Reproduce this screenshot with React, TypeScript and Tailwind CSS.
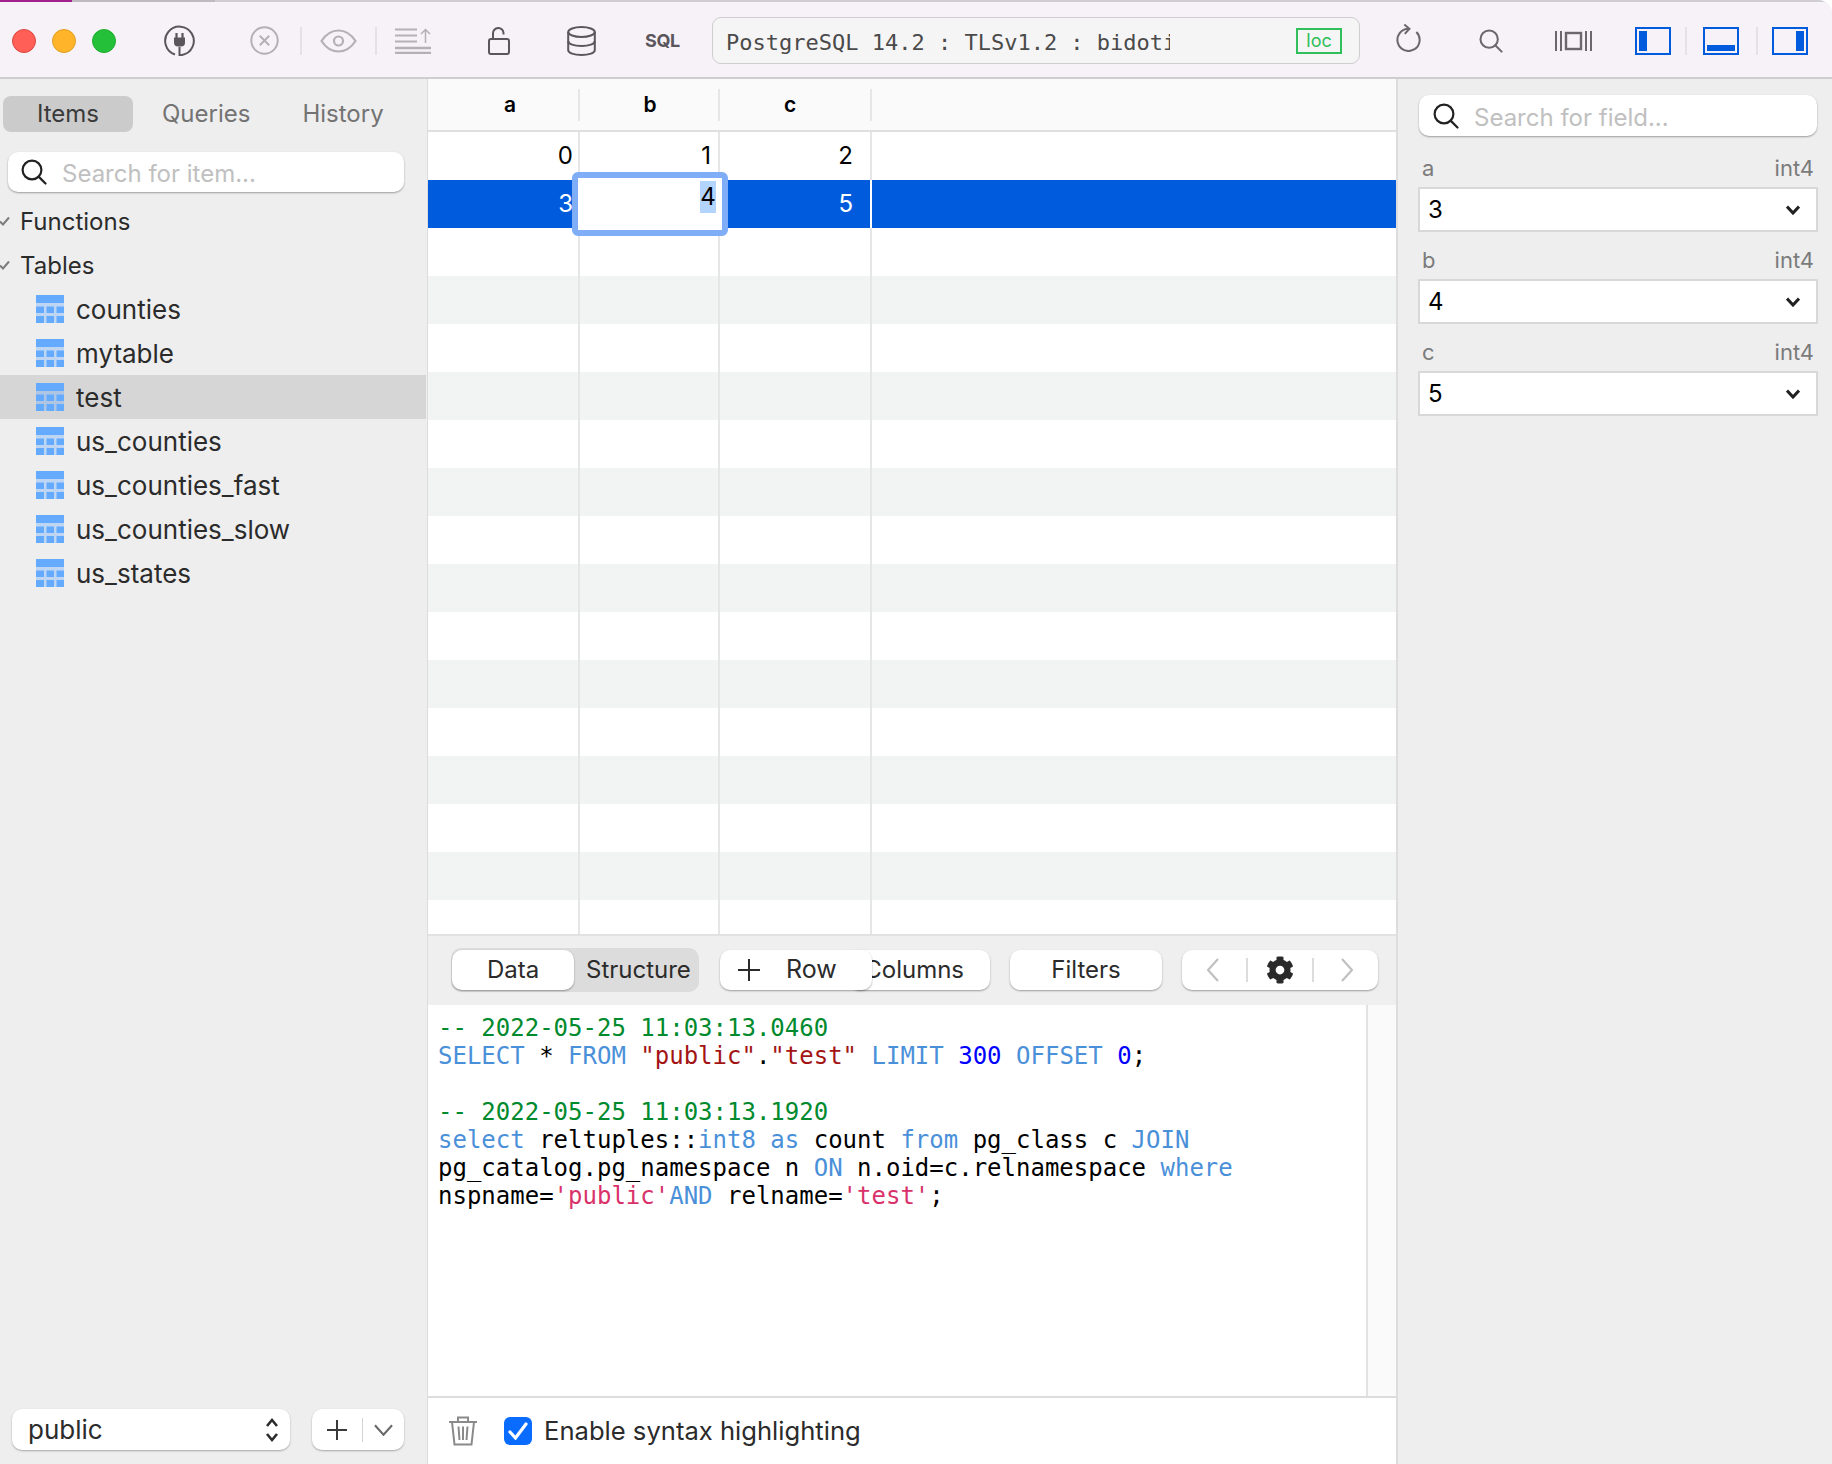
import { FaCog } from "react-icons/fa";

const tables = ["counties", "mytable", "test", "us_counties", "us_counties_fast", "us_counties_slow", "us_states"];
const fields = [
  { name: "a", value: "3" },
  { name: "b", value: "4" },
  { name: "c", value: "5" },
];

function SearchIcon({ className }: { className: string }) {
  return (
    <svg viewBox="0 0 26 26" fill="none" stroke="currentColor" strokeWidth="2.2" strokeLinecap="round" className={className}>
      <circle cx="11" cy="11" r="9.4" />
      <path d="M17.6 17.6 24.5 24.5" />
    </svg>
  );
}

function TableIcon() {
  return (
    <svg viewBox="0 0 28 28" fill="#64aaff" className="w-7 h-7 shrink-0">
      <rect x="0" y="0" width="28" height="8" />
      <rect x="0" y="8" width="28" height="20" fillOpacity="0.35" />
      <rect x="0" y="11.5" width="8" height="6.5" />
      <rect x="10.5" y="11.5" width="7.5" height="6.5" />
      <rect x="20.5" y="11.5" width="7.5" height="6.5" />
      <rect x="0" y="21" width="8" height="7" />
      <rect x="10.5" y="21" width="7.5" height="7" />
      <rect x="20.5" y="21" width="7.5" height="7" />
    </svg>
  );
}

function TreeCheck() {
  return (
    <svg viewBox="0 0 10 10" fill="none" stroke="#7d7d7d" strokeWidth="2" className="w-[10px] h-[10px] shrink-0">
      <path d="M0 5.5 3 8.5 9 1.5" />
    </svg>
  );
}

function Sep() {
  return <div className="w-[2px] h-7 bg-[#e5e2e7] shrink-0" />;
}

function LayoutIcon({ side, className }: { side: "left" | "bottom" | "right"; className: string }) {
  return (
    <svg viewBox="0 0 36 28" className={`w-9 h-7 shrink-0 ${className}`}>
      <rect x="1" y="1" width="34" height="26" fill="none" stroke="#005cdc" strokeWidth="2" />
      {side === "left" && <rect x="4" y="4" width="8" height="20" fill="#005cdc" />}
      {side === "bottom" && <rect x="4" y="18" width="28" height="6" fill="#005cdc" />}
      {side === "right" && <rect x="24" y="4" width="8" height="20" fill="#005cdc" />}
    </svg>
  );
}

function Toolbar() {
  return (
    <div className="h-[77px] flex items-center pl-3 pt-[2px] bg-[#f6f2f8] border-b-2 border-[#cfcdd0] shrink-0">
      <div className="w-6 h-6 rounded-full bg-[#ff5f57] border border-[#e0443e]" />
      <div className="w-6 h-6 rounded-full bg-[#ffb429] border border-[#dfa023] ml-4" />
      <div className="w-6 h-6 rounded-full bg-[#25c03a] border border-[#1dad2b] ml-4" />

      <svg viewBox="0 0 31 31" fill="none" className="w-[31px] h-[31px] ml-12 shrink-0">
        <path d="M11 29.5A14.3 14.3 0 1 1 18 30H15.5V22" stroke="#5b565c" strokeWidth="2" />
        <path d="M10 12.5H21V17.5A4 4 0 0 1 17 21.5H14A4 4 0 0 1 10 17.5Z" fill="#5b565c" />
        <path d="M12.5 8V13M18.5 8V13" stroke="#5b565c" strokeWidth="2.2" />
      </svg>

      <svg viewBox="0 0 29 29" fill="none" stroke="#b4b1b6" strokeWidth="2" className="w-[29px] h-[29px] ml-[55px] shrink-0">
        <circle cx="14.5" cy="14.5" r="13.2" />
        <path d="M9.8 9.8 19.2 19.2M19.2 9.8 9.8 19.2" />
      </svg>
      <div className="ml-[21px]"><Sep /></div>
      <svg viewBox="0 0 37 24" fill="none" stroke="#b4b1b6" strokeWidth="2.2" className="w-[37px] h-6 ml-[18px] shrink-0">
        <path d="M1.5 12C6 5 12 1.5 18.5 1.5S31 5 35.5 12C31 19 25 22.5 18.5 22.5S6 19 1.5 12Z" />
        <circle cx="18.5" cy="12" r="4.5" />
      </svg>
      <div className="ml-[18px]"><Sep /></div>
      <svg viewBox="0 0 36 26" fill="none" stroke="#b4b1b6" strokeWidth="2" className="w-9 h-[26px] ml-[18px] shrink-0">
        <path d="M0 1.5H22M0 7.5H22M0 13.5H22" />
        <path d="M0 20H36M0 25H36" strokeWidth="2.4" />
        <path d="M30.5 15V1.5M26 6 30.5 1.5 35 6" strokeWidth="1.5" />
      </svg>
      <svg viewBox="0 0 22 28" fill="none" stroke="#5b565c" strokeWidth="2" className="w-[22px] h-7 ml-[57px] shrink-0">
        <rect x="1" y="12" width="20" height="15" rx="2" />
        <path d="M5 12V6.5A5 5 0 0 1 15.5 6V7.5" />
      </svg>
      <svg viewBox="0 0 29 30" fill="none" stroke="#5b565c" strokeWidth="2" className="w-[29px] h-[30px] ml-[57px] shrink-0">
        <ellipse cx="14.5" cy="6" rx="13.3" ry="5" />
        <path d="M1.2 6V24C1.2 27 7 29 14.5 29S27.8 27 27.8 24V6" />
        <path d="M1.2 15C1.2 18 7 20 14.5 20S27.8 18 27.8 15" />
      </svg>
      <span className="ml-[49px] w-[37px] text-[18px] font-bold text-[#5b565c] shrink-0 tracking-[-0.4px]">SQL</span>

      <div className="ml-[30px] w-[648px] h-[47px] rounded-[9px] border border-[#cfcdd0] bg-[#f6f5f6] flex items-center pl-[13px] shrink-0">
        <span className="w-[444px] pt-[3px] overflow-hidden whitespace-pre text-[22px] text-[#4a4a4a] font-['DejaVu_Sans_Mono',monospace]">
          PostgreSQL 14.2 : TLSv1.2 : bidoti
        </span>
        <span className="ml-[126px] mt-[1px] w-[46px] h-[26px] border-2 border-[#2fbf5b] text-[#2fbf5b] text-[18px] leading-[21px] text-center">
          loc
        </span>
      </div>

      <svg viewBox="0 0 27 30" fill="none" stroke="#6c676d" strokeWidth="2.2" className="w-[25px] h-[28px] ml-[36px] -mt-[6px] shrink-0">
        <path d="M22 8.5A12 12 0 1 1 13.5 5" />
        <path d="M9 0.5 14.5 5 9.5 10.5" />
      </svg>
      <SearchIcon className="w-6 h-6 ml-[58px] text-[#6c676d] shrink-0" />
      <svg viewBox="0 0 37 22" fill="none" stroke="#6c676d" strokeWidth="2" className="w-[37px] h-[22px] ml-[52px] shrink-0">
        <path d="M1 1V21M6 1V21M31 1V21M36 1V21" />
        <rect x="11" y="3" width="15" height="16" strokeWidth="2.4" />
      </svg>
      <LayoutIcon side="left" className="ml-[43px]" />
      <div className="ml-[14px]"><Sep /></div>
      <LayoutIcon side="bottom" className="ml-4" />
      <div className="ml-[17px]"><Sep /></div>
      <LayoutIcon side="right" className="ml-[14px]" />
    </div>
  );
}

function Sidebar() {
  return (
    <aside className="w-[427px] shrink-0 bg-[#eeeeee] flex flex-col text-[#2b2b2b]">
      <div className="flex items-center h-9 mt-[17px] ml-[3px] text-[24px] text-[#737373]">
        <div className="w-[130px] h-9 rounded-lg bg-[#cbcbcb] text-[#3a3a3a] flex items-center justify-center">Items</div>
        <span className="ml-[29px]">Queries</span>
        <span className="ml-[52px]">History</span>
      </div>

      <div className="mx-2 mt-5 h-10 w-[396px] rounded-[10px] bg-white shadow-[0_1px_2px_rgba(0,0,0,0.35)] flex items-center pl-[13px]">
        <SearchIcon className="w-[26px] h-[26px] text-[#222] shrink-0" />
        <span className="ml-[15px] pt-[3px] text-[24px] text-[#c0c0c0]">Search for item...</span>
      </div>

      <div className="mt-[7px] text-[24px]">
        <div className="h-11 flex items-center">
          <TreeCheck />
          <span className="ml-[10px] pt-[2px]">Functions</span>
        </div>
        <div className="h-11 flex items-center">
          <TreeCheck />
          <span className="ml-[10px] pt-[2px]">Tables</span>
        </div>
        {tables.map((t) => (
          <div key={t} className={`h-11 w-[426px] flex items-center pl-9 ${t === "test" ? "bg-[#d6d6d6]" : ""}`}>
            <TableIcon />
            <span className="ml-3 text-[26px]">{t}</span>
          </div>
        ))}
      </div>

      <div className="mt-auto mb-[14px] flex items-center h-[41px] pl-3">
        <div className="w-[278px] h-[41px] rounded-[10px] bg-white shadow-[0_1px_2px_rgba(0,0,0,0.3)] flex items-center pl-4 pr-[11px] justify-between text-[26px]">
          <span>public</span>
          <svg viewBox="0 0 14 26" fill="none" stroke="#2b2b2b" strokeWidth="2.6" className="w-[14px] h-[26px]">
            <path d="M2 9 7 3 12 9M2 17 7 23 12 17" />
          </svg>
        </div>
        <div className="ml-[22px] w-[92px] h-[41px] rounded-[10px] bg-white shadow-[0_1px_2px_rgba(0,0,0,0.3)] flex items-center">
          <svg viewBox="0 0 20 20" fill="none" stroke="#3a3a3a" strokeWidth="2" className="w-5 h-5 ml-[15px]">
            <path d="M10 0V20M0 10H20" />
          </svg>
          <div className="w-px h-6 bg-[#d5d5d5] ml-[15px]" />
          <svg viewBox="0 0 20 12" fill="none" stroke="#6a6a6a" strokeWidth="2.2" className="w-[19px] h-3 ml-[11px]">
            <path d="M1 1 10 11 19 1" />
          </svg>
        </div>
      </div>
    </aside>
  );
}

function Grid() {
  const rows = Array.from({ length: 17 }, (_, i) => i);
  const values: Record<number, string[]> = { 0: ["0", "1", "2"], 1: ["3", "", "5"] };
  return (
    <div className="flex-1 min-h-0 relative overflow-hidden">
      <div className="h-[53px] bg-[#fafafa] border-b-2 border-[#e0e0e0] flex items-center text-[21px] font-semibold text-black">
        <div className="w-[152px] h-8 border-r-2 border-[#e6e6e6] flex items-center justify-center pl-[14px]">a</div>
        <div className="w-[140px] h-8 border-r-2 border-[#e6e6e6] flex items-center justify-center pl-[2px]">b</div>
        <div className="w-[152px] h-8 border-r-2 border-[#e6e6e6] flex items-center justify-center pr-[10px]">c</div>
      </div>
      {rows.map((i) => {
        const selected = i === 1;
        const bg = selected ? "bg-[#005cdc] text-white" : i > 1 && i % 2 === 1 ? "bg-[#f2f4f3] text-black" : "bg-white text-black";
        const line = selected ? "border-white" : "border-[#e6e6e6]";
        const cells = values[i] ?? ["", "", ""];
        return (
          <div key={i} className={`h-12 flex text-[24px] leading-[48px] text-right ${bg}`}>
            <div className={`w-[152px] border-r-2 pr-[5px] ${line}`}>{cells[0]}</div>
            <div className={`w-[140px] border-r-2 pr-[7px] ${line}`}>{cells[1]}</div>
            <div className={`w-[152px] border-r-2 pr-[17px] ${line}`}>{cells[2]}</div>
          </div>
        );
      })}
      {/* cell being edited */}
      <div className="absolute left-[144px] top-[93px] w-[156px] h-16 border-[6px] border-[#7fadf7] rounded-md bg-white">
        <div className="absolute right-[6px] top-[3px] w-4 h-8 bg-[#b3d4fc] text-[24px] leading-8 text-center text-black">4</div>
      </div>
    </div>
  );
}

const btn = "h-10 rounded-[10px] bg-white shadow-[0_1px_2px_rgba(0,0,0,0.35)] flex items-center text-[24px] text-[#2b2b2b]";

function BottomBar() {
  return (
    <div className="h-[71px] shrink-0 bg-[#efefef] border-t-2 border-[#e2e2e2] flex items-center pl-[23px] pb-[2px]">
      <div className="w-[248px] h-11 rounded-[10px] bg-[#dcdcdc] flex items-center pl-[1px]">
        <div className={`${btn} w-[122px] justify-center`}>Data</div>
        <span className="ml-3 text-[24px] text-[#2b2b2b]">Structure</span>
      </div>
      <div className={`${btn} w-[152px] ml-[21px] pl-[18px] relative z-10`}>
        <svg viewBox="0 0 22 22" fill="none" stroke="#2b2b2b" strokeWidth="2" className="w-[22px] h-[22px]">
          <path d="M11 0V22M0 11H22" />
        </svg>
        <span className="ml-[26px] text-[25px]">Row</span>
      </div>
      <div className={`${btn} w-[141px] -ml-[23px] justify-end pr-[26px]`}>Columns</div>
      <div className={`${btn} w-[152px] ml-[20px] justify-center`}>Filters</div>
      <div className={`${btn} w-[196px] ml-[20px] pl-[25px]`}>
        <svg viewBox="0 0 12 24" fill="none" stroke="#c0c0c0" strokeWidth="2.2" className="w-3 h-6 shrink-0">
          <path d="M11 1 1 12 11 23" />
        </svg>
        <div className="w-[2px] h-6 bg-[#dcdcdc] ml-[27px] shrink-0" />
        <FaCog className="w-7 h-7 ml-[18px] shrink-0 text-[#2a2a2a]" />
        <div className="w-[2px] h-6 bg-[#dcdcdc] ml-[18px] shrink-0" />
        <svg viewBox="0 0 12 24" fill="none" stroke="#c0c0c0" strokeWidth="2.2" className="w-3 h-6 ml-[27px] shrink-0">
          <path d="M1 1 11 12 1 23" />
        </svg>
      </div>
    </div>
  );
}

function Log() {
  const kw = "text-[#4a90d9]";
  const green = "text-[#008a2e]";
  const red = "text-[#a31515]";
  const num = "text-[#0000ff]";
  const pink = "text-[#d9326a]";
  return (
    <div className="h-[391px] shrink-0 flex bg-white">
      <pre className="flex-1 pl-[10px] pt-[9px] text-[24px] leading-[28px] text-black font-['DejaVu_Sans_Mono',monospace]">
        <span className={green}>-- 2022-05-25 11:03:13.0460</span>{"\n"}
        <span className={kw}>SELECT</span> * <span className={kw}>FROM</span> <span className={red}>"public"</span>.<span className={red}>"test"</span> <span className={kw}>LIMIT</span> <span className={num}>300</span> <span className={kw}>OFFSET</span> <span className={num}>0</span>;{"\n\n"}
        <span className={green}>-- 2022-05-25 11:03:13.1920</span>{"\n"}
        <span className={kw}>select</span> reltuples::<span className={kw}>int8</span> <span className={kw}>as</span> count <span className={kw}>from</span> pg_class c <span className={kw}>JOIN</span>{"\n"}
        pg_catalog.pg_namespace n <span className={kw}>ON</span> n.oid=c.relnamespace <span className={kw}>where</span>{"\n"}
        nspname=<span className={pink}>'public'</span><span className={kw}>AND</span> relname=<span className={pink}>'test'</span>;
      </pre>
      <div className="w-[30px] bg-[#fafafa] border-l-2 border-[#e2e2e2]" />
    </div>
  );
}

function LogFooter() {
  return (
    <div className="h-[68px] shrink-0 border-t-2 border-[#dddddd] bg-white flex items-center pl-[21px] text-[25.6px] text-[#2b2b2b]">
      <svg viewBox="0 0 28 30" fill="none" stroke="#8a8a8a" strokeWidth="2" className="w-7 h-[30px] shrink-0">
        <path d="M0 6H28M9 6V1.5H19V6" />
        <path d="M3 6 5.5 28.5H22.5L25 6" />
        <path d="M9.5 10.5 10.5 24M14 10.5V24M18.5 10.5 17.5 24" />
      </svg>
      <div className="w-7 h-7 ml-[27px] rounded-md bg-[#0a6cff] flex items-center justify-center shrink-0">
        <svg viewBox="0 0 20 18" fill="none" stroke="white" strokeWidth="3.2" strokeLinecap="round" className="w-5 h-[18px]">
          <path d="M2 10 7.5 16 18 2" />
        </svg>
      </div>
      <span className="ml-3">Enable syntax highlighting</span>
    </div>
  );
}

function FieldPanel() {
  return (
    <aside className="flex-1 bg-[#eeeeee] border-l-2 border-[#dddddd] pl-[20px] text-[#2b2b2b]">
      <div className="mt-4 h-[41px] w-[398px] ml-[1px] rounded-[10px] bg-white shadow-[0_1px_2px_rgba(0,0,0,0.35)] flex items-center pl-[14px]">
        <SearchIcon className="w-[26px] h-[26px] text-[#222] shrink-0" />
        <span className="ml-[15px] pt-1 text-[24px] text-[#c0c0c0]">Search for field...</span>
      </div>
      <div className="mt-[17px]">
        {fields.map((f) => (
          <div key={f.name} className="mb-[13px]">
            <div className="h-[34px] w-[400px] flex items-center justify-between pb-1 pl-1 pr-[4px] text-[22px] text-[#7b7b7b]">
              <span>{f.name}</span>
              <span>int4</span>
            </div>
            <div className="h-[45px] w-[400px] bg-white border-2 border-[#d8d8d8] flex items-center justify-between pl-2 pr-[16px] text-[24px] text-black">
              <span>{f.value}</span>
              <svg viewBox="0 0 14 10" fill="none" stroke="#222" strokeWidth="3" className="w-[14px] h-[10px]">
                <path d="M1 1.5 7 8 13 1.5" />
              </svg>
            </div>
          </div>
        ))}
      </div>
    </aside>
  );
}

export default function App() {
  return (
    <div className="w-[1832px] h-[1464px] bg-white overflow-hidden font-['Inter',sans-serif]">
      <div className="h-full rounded-tr-[14px] overflow-hidden flex flex-col bg-[#eeeeee]">
        <div className="h-[2px] flex shrink-0 bg-[#cfcdd0]">
          <div className="w-[72px] bg-[#a3218c]" />
          <div className="w-[143px] bg-[#bdbbbe]" />
        </div>
        <Toolbar />
        <div className="flex-1 min-h-0 flex">
          <Sidebar />
          <main className="w-[969px] shrink-0 flex flex-col bg-white border-l border-[#dddddd]">
            <Grid />
            <BottomBar />
            <Log />
            <LogFooter />
          </main>
          <FieldPanel />
        </div>
      </div>
    </div>
  );
}
